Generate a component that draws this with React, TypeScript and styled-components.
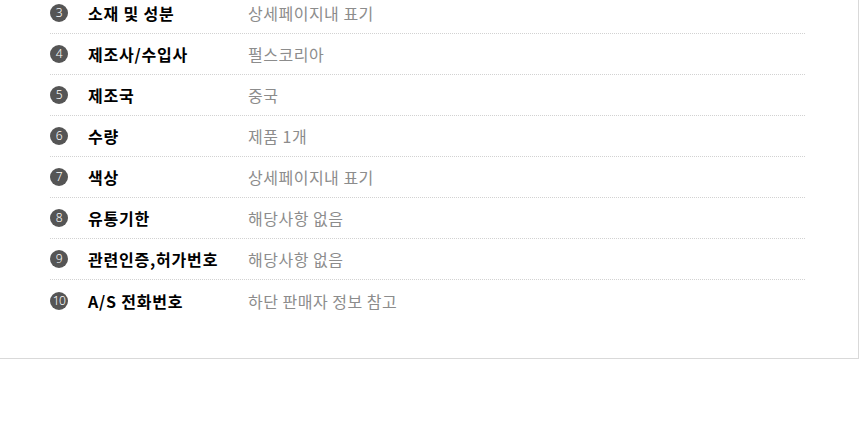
import React from 'react';
import styled, { createGlobalStyle } from 'styled-components';

const GlobalStyle = createGlobalStyle`
    html, body {
        margin: 0;
        padding: 0;
        background: #fff;
        overflow: hidden;
    }
    body {
        font-family: 'Noto Sans CJK KR', 'Noto Sans', sans-serif;
    }
`;

const Panel = styled.section`
    width: 859px;
    margin-top: -7px;
    box-sizing: border-box;
    border-right: 1px solid #d9d9d9;
    border-bottom: 1px solid #d9d9d9;
    background: #fff;
    padding: 0 53px 37px 50px;
`;

const InfoList = styled.ol`
    list-style: none;
    margin: 0;
    padding: 0;
`;

const InfoRow = styled.li<{ $last?: boolean }>`
    display: flex;
    align-items: center;
    height: 41px;
    box-sizing: border-box;
    border-bottom: ${(p) => (p.$last ? 'none' : '1px dotted #d2d2d2')};
`;

const Badge = styled.span`
    flex: none;
    width: 18px;
    height: 18px;
    border-radius: 50%;
    background: #555;
    color: #fff;
    font-family: 'Noto Sans', sans-serif;
    font-weight: 300;
    font-size: 12px;
    line-height: 18px;
    text-align: center;
    letter-spacing: -0.5px;
`;

const Label = styled.span`
    flex: none;
    width: 160px;
    margin-left: 20px;
    font-size: 16px;
    font-weight: 700;
    color: #000;
    letter-spacing: 0.8px;
`;

const Value = styled.span`
    font-size: 16px;
    font-weight: 400;
    color: #8c8c8c;
    letter-spacing: 0.5px;
`;

const rows = [
    { no: 3, label: '소재 및 성분', value: '상세페이지내 표기' },
    { no: 4, label: '제조사/수입사', value: '펄스코리아' },
    { no: 5, label: '제조국', value: '중국' },
    { no: 6, label: '수량', value: '제품 1개' },
    { no: 7, label: '색상', value: '상세페이지내 표기' },
    { no: 8, label: '유통기한', value: '해당사항 없음' },
    { no: 9, label: '관련인증,허가번호', value: '해당사항 없음' },
    { no: 10, label: 'A/S 전화번호', value: '하단 판매자 정보 참고' },
];

const App = () => (
    <>
        <GlobalStyle />
        <Panel>
            <InfoList>
                {rows.map((row, i) => (
                    <InfoRow key={row.no} $last={i === rows.length - 1}>
                        <Badge>{row.no}</Badge>
                        <Label>{row.label}</Label>
                        <Value>{row.value}</Value>
                    </InfoRow>
                ))}
            </InfoList>
        </Panel>
    </>
);

export default App;
